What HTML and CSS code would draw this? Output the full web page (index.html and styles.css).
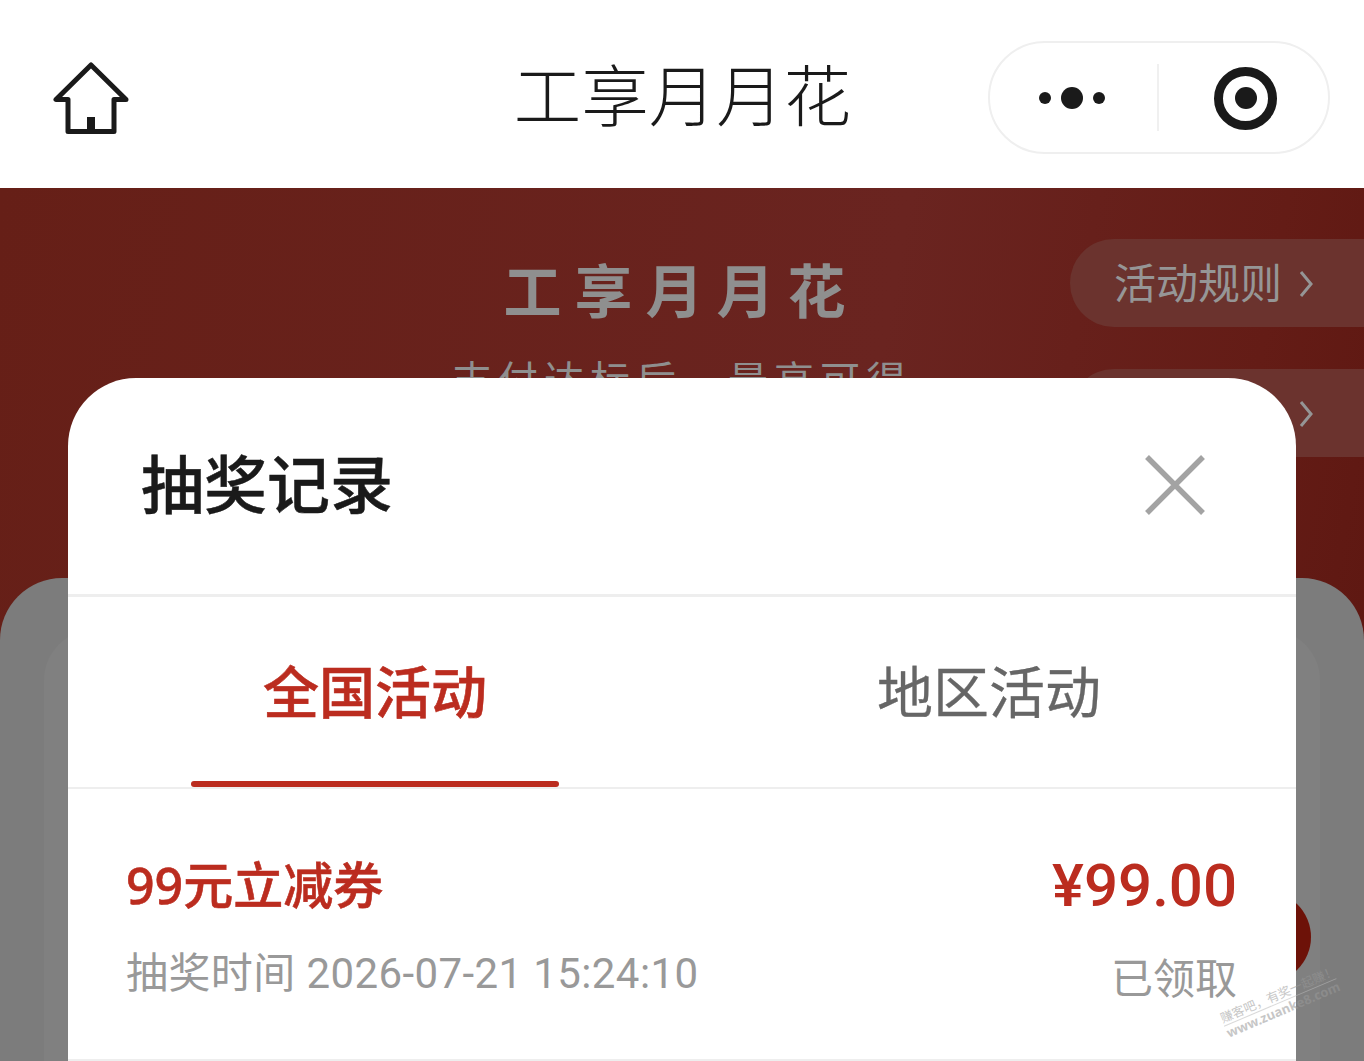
FILE: index.html
```html
<!DOCTYPE html>
<html lang="zh-CN">
<head>
    <meta charset="UTF-8">
    <meta name="viewport" content="width=device-width, initial-scale=1.0">
    <title>工享月月花</title>
    <link rel="stylesheet" href="styles.css">
</head>
<body>
    <header class="navbar">
        <svg class="home-icon" viewBox="0 0 76 74" width="76" height="74">
            <path d="M38 3 L3 37.5 H15 V69.5 H61 V37.5 H73 Z" fill="none" stroke="#1a1a1a" stroke-width="5" stroke-linejoin="round"/>
            <rect x="34" y="55" width="8" height="13" fill="#1a1a1a"/>
        </svg>
        <div class="nav-title">工享月月花</div>
        <div class="capsule">
            <div class="capsule-part">
                <span class="dot"></span>
                <span class="dot dot-big"></span>
                <span class="dot"></span>
            </div>
            <div class="capsule-line"></div>
            <div class="capsule-part">
                <span class="target"><span class="target-core"></span></span>
            </div>
        </div>
    </header>

    <main class="hero">
        <div class="hero-head">
            <h1 class="hero-title">工享月月花</h1>
            <p class="hero-sub">支付达标后，最高可得</p>
        </div>
        <div class="side-btns">
            <div class="side-btn">活动规则
                <svg class="side-arrow" viewBox="0 0 14 28" width="14" height="28"><path d="M2 2 L12 14 L2 26" fill="none" stroke="#959595" stroke-width="3"/></svg>
            </div>
            <div class="side-btn">抽奖记录
                <svg class="side-arrow" viewBox="0 0 14 28" width="14" height="28"><path d="M2 2 L12 14 L2 26" fill="none" stroke="#959595" stroke-width="3"/></svg>
            </div>
        </div>
        <div class="panel">
            <div class="panel-inner"></div>
        </div>
        <div class="float-ball"></div>
    </main>

    <section class="modal">
        <div class="modal-head">
            <h2 class="modal-title">抽奖记录</h2>
            <svg class="close-icon" viewBox="0 0 60 60" width="60" height="60">
                <path d="M2 2 L58 58 M58 2 L2 58" stroke="#a3a3a3" stroke-width="5.5" fill="none"/>
            </svg>
        </div>
        <div class="tabs">
            <div class="tab active">全国活动</div>
            <div class="tab">地区活动</div>
        </div>
        <div class="record">
            <div class="record-left">
                <div class="record-name">99元立减券</div>
                <div class="record-time">抽奖时间 2026-07-21 15:24:10</div>
            </div>
            <div class="record-right">
                <div class="record-price">¥99.00</div>
                <div class="record-status">已领取</div>
            </div>
        </div>
    </section>

    <div class="watermark">
        <div class="wm-top">赚客吧，有奖一起赚！</div>
        <div class="wm-bottom">www.zuanke8.com</div>
    </div>
</body>
</html>
```

FILE: styles.css
```css
* {
    box-sizing: border-box;
}

html, body {
    margin: 0;
    height: 1061px;
    overflow: hidden;
}

body {
    position: relative;
    background: #fff;
    font-family: "Noto Sans", "Noto Sans CJK SC", sans-serif;
}

.navbar {
    height: 188px;
    padding: 41px 34px 34px 53px;
    display: flex;
    align-items: center;
    justify-content: space-between;
    position: relative;
    background: #fff;
}

.home-icon {
    margin-top: 3px;
}

.nav-title {
    position: absolute;
    left: 0;
    right: 0;
    top: 55px;
    padding-left: 1px;
    text-align: center;
    font-size: 67.5px;
    line-height: 80px;
    font-weight: 300;
    color: #1a1a1a;
}

.capsule {
    width: 342px;
    height: 113px;
    border: 2px solid #efefef;
    border-radius: 57px;
    display: flex;
    align-items: center;
    background: #fff;
}

.capsule-part {
    flex: 1;
    display: flex;
    align-items: center;
    justify-content: center;
    gap: 10px;
}

.capsule-part:first-child {
    padding-right: 2px;
}

.capsule-part:last-child {
    padding-left: 5px;
    padding-top: 1px;
}

.capsule-line {
    width: 2px;
    height: 67px;
    background: #f0f0f0;
}

.dot {
    width: 12px;
    height: 12px;
    border-radius: 50%;
    background: #1a1a1a;
}

.dot-big {
    width: 22px;
    height: 22px;
}

.target {
    width: 63px;
    height: 63px;
    border: 9px solid #1a1a1a;
    border-radius: 50%;
    display: flex;
    align-items: center;
    justify-content: center;
}

.target-core {
    width: 22px;
    height: 22px;
    border-radius: 50%;
    background: #1a1a1a;
}

.hero {
    height: 873px;
    position: relative;
    overflow: hidden;
    background: linear-gradient(100deg, #661f17 0%, #6a2420 60%, #641c16 85%, #5c1610 100%);
}

.hero-head {
    padding-top: 65px;
    text-align: center;
    color: #8f8f8f;
}

.hero-title {
    margin: 0;
    font-size: 58px;
    line-height: 76px;
    font-weight: 700;
    letter-spacing: 13px;
    padding-right: 2px;
}

.hero-sub {
    margin: 25px 0 0;
    font-size: 40px;
    line-height: 52px;
    letter-spacing: 6px;
}

.side-btns {
    position: absolute;
    right: 0;
    top: 51px;
    display: flex;
    flex-direction: column;
    align-items: flex-end;
    gap: 42px;
}

.side-btn {
    width: 294px;
    height: 88px;
    padding: 0 0 6px 44px;
    display: flex;
    align-items: center;
    border-radius: 44px 0 0 44px;
    background: #6b332e;
    color: #969696;
    font-size: 42px;
}

.side-arrow {
    margin: 8px 0 0 17px;
}

.panel {
    position: absolute;
    left: 0;
    right: 0;
    top: 390px;
    bottom: 0;
    padding: 52px 44px 0;
    background: #7c7c7c;
    border-radius: 62px 62px 0 0;
}

.panel-inner {
    height: 100%;
    background: #808080;
    border-radius: 50px 50px 0 0;
}

.float-ball {
    position: absolute;
    left: 1219px;
    top: 703px;
    width: 92px;
    height: 92px;
    border-radius: 50%;
    background: #6d1208;
}

.modal {
    position: absolute;
    left: 68px;
    top: 378px;
    width: 1228px;
    height: 683px;
    background: #fff;
    border-radius: 68px 68px 0 0;
}

.modal-head {
    height: 219px;
    padding: 0 91px 0 73px;
    display: flex;
    align-items: center;
    justify-content: space-between;
    border-bottom: 3px solid #eeeeee;
}

.modal-title {
    margin: 0 0 4px;
    font-size: 63px;
    line-height: 84px;
    font-weight: 500;
    color: #1a1a1a;
    -webkit-text-stroke: 0.5px #1a1a1a;
}

.close-icon {
    margin-bottom: 2px;
}

.tabs {
    height: 192px;
    display: flex;
    border-bottom: 2px solid #eeeeee;
}

.tab {
    flex: 1;
    display: flex;
    justify-content: center;
    padding-top: 56px;
    position: relative;
    font-size: 56px;
    line-height: 76px;
    color: #666;
    -webkit-text-stroke: 0.3px #666;
}

.tab.active {
    color: #bb2c1f;
    font-weight: 500;
    -webkit-text-stroke: 0.6px #bb2c1f;
}

.tab.active::after {
    content: "";
    position: absolute;
    left: 123px;
    right: 123px;
    bottom: 0;
    height: 6px;
    border-radius: 3px;
    background: #bb2c1f;
}

.record {
    height: 272px;
    padding: 60px 59px 0 58px;
    display: flex;
    justify-content: space-between;
    border-bottom: 2px solid #eeeeee;
}

.record-name {
    margin-top: 1px;
    font-size: 50px;
    line-height: 70px;
    font-weight: 500;
    color: #bb2c1f;
    -webkit-text-stroke: 0.6px #bb2c1f;
}

.record-time {
    margin-top: 25px;
    font-family: Roboto, "Noto Sans CJK SC", sans-serif;
    font-size: 42px;
    line-height: 58px;
    letter-spacing: 0.4px;
    color: #999;
}

.record-right {
    text-align: right;
}

.record-price {
    margin-top: 2px;
    font-family: Roboto, "Noto Sans", sans-serif;
    font-size: 60px;
    line-height: 70px;
    font-weight: 500;
    color: #bb2c1f;
}

.record-status {
    margin-top: 28px;
    font-size: 42px;
    line-height: 58px;
    color: #999;
}

.watermark {
    position: absolute;
    left: 1218px;
    top: 1012px;
    width: 122px;
    transform: rotate(-23deg);
    transform-origin: left top;
    opacity: 0.55;
    color: #999;
}

.wm-top {
    font-size: 12.5px;
    line-height: 15px;
    white-space: nowrap;
    border-bottom: 1px solid #bbb;
}

.wm-bottom {
    font-size: 13px;
    line-height: 14px;
    white-space: nowrap;
    font-weight: 700;
}
```
